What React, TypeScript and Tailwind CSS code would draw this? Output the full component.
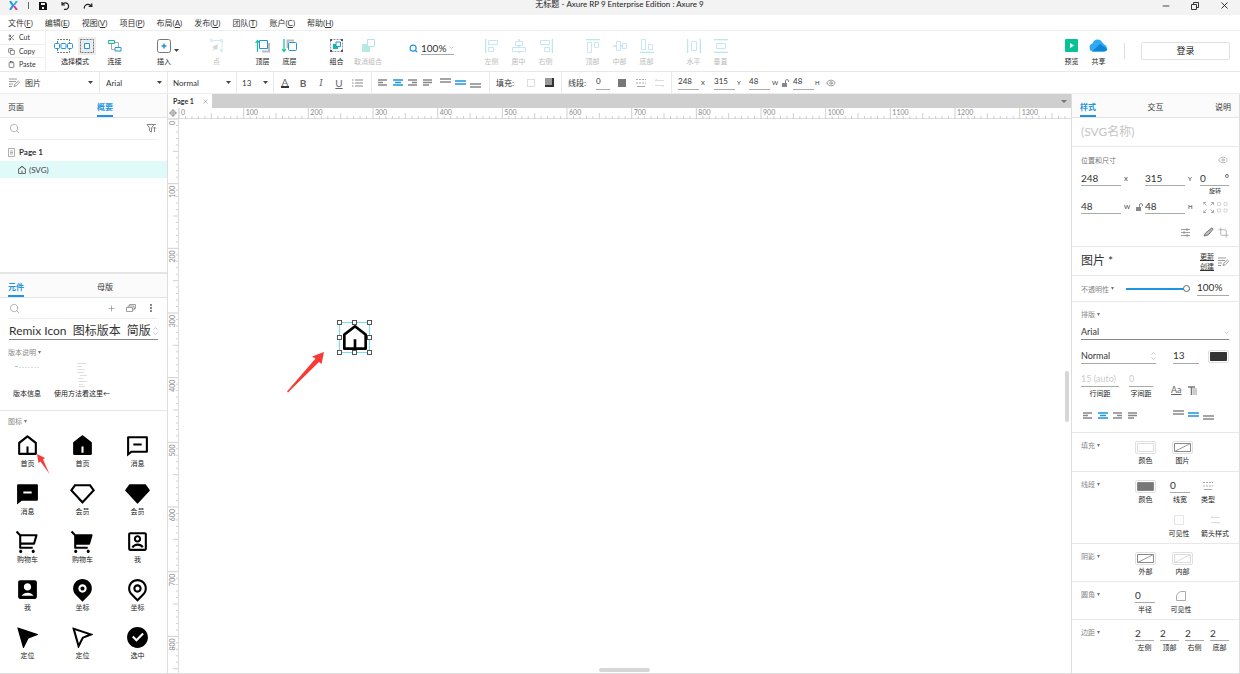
import React from 'react';
import {
  RiAccountBoxFill,
  RiAccountBoxLine,
  RiCheckboxCircleFill,
  RiMapPinFill,
  RiMapPinLine,
  RiNavigationFill,
  RiNavigationLine,
  RiShoppingCart2Fill,
  RiShoppingCart2Line,
  RiVipDiamondFill,
  RiVipDiamondLine,
} from 'react-icons/ri';
import { ClipboardIcon, Copy, Crop, Eye, Minus, Plus, Redo, Scissors, Search, X } from 'lucide-react';

const BLUE = '#1d95e0';
const TEAL = '#0fbf9b';

type Kids = { children?: React.ReactNode };

const Svg: React.FC<Kids & { w: number; h: number; className?: string }> = ({ w, h, className = '', children }) => (
  <svg width={w} height={h} viewBox={`0 0 ${w} ${h}`} fill="none" className={`flex-shrink-0 ${className}`} aria-hidden="true">
    {children}
  </svg>
);

const Caret = ({ className = '' }: { className?: string }) => (
  <Svg w={5} h={3} className={className}><path d="M0 0h5L2.5 3z" fill="#444" /></Svg>
);

const HomeLine = ({ size }: { size: number }) => (
  <svg width={size} height={size} viewBox="0 0 24 24" fill="currentColor" aria-hidden="true">
    <path d="M13 19h6V9.978l-7-5.444-7 5.444V19h6v-6h2v6zm8 1a1 1 0 0 1-1 1H4a1 1 0 0 1-1-1V9.49a1 1 0 0 1 .386-.79l8-6.222a1 1 0 0 1 1.228 0l8 6.222a1 1 0 0 1 .386.79V20z" />
  </svg>
);

const HomeFill = ({ size }: { size: number }) => (
  <svg width={size} height={size} viewBox="0 0 24 24" fill="currentColor" fillRule="evenodd" aria-hidden="true">
    <path d="M21 20a1 1 0 0 1-1 1H4a1 1 0 0 1-1-1V9.49a1 1 0 0 1 .386-.79l8-6.222a1 1 0 0 1 1.228 0l8 6.222a1 1 0 0 1 .386.79V20zM11 13v6h2v-6z" />
  </svg>
);

const MessageLine = ({ size }: { size: number }) => (
  <svg width={size} height={size} viewBox="0 0 24 24" fill="currentColor" aria-hidden="true">
    <path d="M6.455 19L2 22.5V4a1 1 0 0 1 1-1h18a1 1 0 0 1 1 1v14a1 1 0 0 1-1 1H6.455zm-.692-2H20V5H4v13.385L5.763 17zM8 10h8v2H8v-2z" />
  </svg>
);

const MessageFill = ({ size }: { size: number }) => (
  <svg width={size} height={size} viewBox="0 0 24 24" fill="currentColor" fillRule="evenodd" aria-hidden="true">
    <path d="M6.455 19L2 22.5V4a1 1 0 0 1 1-1h18a1 1 0 0 1 1 1v14a1 1 0 0 1-1 1H6.455zM8 10h8v2H8v-2z" />
  </svg>
);

const StyleIcon = ({ className = '' }: { className?: string }) => (
  <Svg w={11} h={9} className={className}>
    <path d="M0 1h8M0 3.5h7M0 6h4M0 8.500h3M5 8.500l.6-2 3.800-3.500 1.200 1.200L7 7.900z" stroke="#999" />
  </Svg>
);

const LockIcon = () => (
  <Svg w={7} h={8}>
    <rect y="4" width="5" height="4" fill="#888" />
    <path d="M3.500 4V2a1.500 1.500 0 0 1 3 0v1" stroke="#888" />
  </Svg>
);

const AlignIcon = ({ kind, active }: { kind: string; active?: boolean }) => {
  const paths: Record<string, string> = {
    left: 'M0 1h9M0 3.500h5M0 6h9',
    center: 'M0 1h10M2 3.500h6M0 6h10',
    right: 'M0 1h9M4 3.500h5M0 6h9',
    justify: 'M0 1h9M0 3.500h9M0 6h6',
  };
  return <Svg w={10} h={7}><path d={paths[kind]} stroke={active ? BLUE : '#888'} strokeWidth="1.300" /></Svg>;
};

const VAlignIcon = ({ pos, active }: { pos: 'top' | 'middle' | 'bottom'; active?: boolean }) => {
  const y = { top: 1, middle: 3, bottom: 6 }[pos];
  return (
    <Svg w={11} h={10}>
      <path d={`M0 ${y}h11M0 ${y + 3}h11`} stroke={active ? BLUE : '#888'} strokeWidth="1.300" />
    </Svg>
  );
};

const DashIcon = () => (
  <Svg w={10} h={8}><path d="M0 .5h10M0 4h10" stroke="#aaa" strokeDasharray="2 1" /><path d="M1 7.500h8" stroke="#aaa" /></Svg>
);

const ArrowsIcon = () => (
  <Svg w={9} h={8}><path d="M9 1.500H0l2-1.500M0 6.500h9l-2 1.500" stroke="#ddd" /></Svg>
);

const IconButton: React.FC<Kids & { label: string; className?: string }> = ({ label, className = '', children }) => (
  <button type="button" aria-label={label} className={`flex items-center justify-center ${className}`}>{children}</button>
);

/* Underlined numeric / text field */
const Field: React.FC<{ label: string; value: string; className?: string }> = ({ label, value, className = '' }) => (
  <input aria-label={label} defaultValue={value} className={`min-w-0 border-b border-[#aaa] bg-transparent pb-[2px] outline-none ${className}`} />
);

const menus = [
  ['文件', 'F'], ['编辑', 'E'], ['视图', 'V'], ['项目', 'P'], ['布局', 'A'],
  ['发布', 'U'], ['团队', 'T'], ['账户', 'C'], ['帮助', 'H'],
];

const TitleBar = () => (
  <header className="flex h-[15px] flex-shrink-0 items-center bg-[#f3f3f3] text-[#222]">
    <div className="flex flex-1 items-center pb-1 pl-[9px]">
      <Svg w={9} h={9}>
        <path d="M1 0l3 4.500L1 9" stroke={BLUE} strokeWidth="2" />
        <path d="M8 0L5 4" stroke="#2fb4e8" strokeWidth="2" />
        <path d="M5 5l3 4" stroke="#e0338a" strokeWidth="2" />
      </Svg>
      <span className="ml-[10px] h-[7px] w-px bg-[#666]" />
      <IconButton label="Save" className="ml-[10px]">
        <Svg w={8} h={8}><path fillRule="evenodd" d="M0 0h6.500L8 1.500V8H0zM2 1v2h4V1zM3 5v2h2V5z" fill="#111" /></Svg>
      </IconButton>
      <IconButton label="Undo" className="ml-[14px]">
        <Svg w={9} h={8}><path d="M1 0v3h3M1.200 3A3.300 3.300 0 1 1 3 7.200" stroke="#222" strokeWidth="1.200" /></Svg>
      </IconButton>
      <IconButton label="Redo" className="ml-[13px]"><Redo size={10} strokeWidth={3} /></IconButton>
    </div>
    <h1 className="whitespace-nowrap pb-[7px] text-[8px] leading-[10px] font-normal">无标题 - Axure RP 9 Enterprise Edition : Axure 9</h1>
    <div className="flex flex-1 items-center justify-end pr-[10px] pb-1">
      <IconButton label="Minimize"><Minus size={10} strokeWidth={2} /></IconButton>
      <IconButton label="Restore" className="ml-[20px]">
        <Svg w={8} h={8}><path d="M.5 2.500h5v5h-5zM2.500 2V.5h5v5H6" stroke="#333" /></Svg>
      </IconButton>
      <IconButton label="Close" className="ml-[20px]"><X size={11} strokeWidth={2} /></IconButton>
    </div>
  </header>
);

const Tool: React.FC<Kids & { label: string; className?: string; faded?: boolean }> = ({ label, className = 'w-[27px]', faded, children }) => (
  <button type="button" className={`flex flex-shrink-0 flex-col items-center pt-[6px] ${className}`}>
    <span className={`flex h-[17px] items-center justify-center ${faded ? 'opacity-30' : ''}`}>{children}</span>
    <span className={`mt-[2px] whitespace-nowrap text-[7px] leading-[10px] ${faded ? 'text-[#bbb]' : 'text-[#222]'}`}>{label}</span>
  </button>
);

const distribution = [
  [
    { label: '左侧', bar: 'M.5 0v14', box: 'M3.500 1.500h9v4h-9zM3.500 8.500h5v4h-5z' },
    { label: '居中', bar: 'M7 0v14', box: 'M3.500 2.500h7v4h-7zM.5 8.500h13v4H.5z' },
    { label: '右侧', bar: 'M13.500 0v14', box: 'M1.500 1.500h9v4h-9zM5.500 8.500h5v4h-5z' },
  ],
  [
    { label: '顶部', bar: 'M0 .5h14', box: 'M1.500 3.500h4v10h-4zM8.500 3.500h4v5h-4z' },
    { label: '中部', bar: 'M0 7h14', box: 'M3.500 2.500h4v9h-4zM9.500 4.500h4v5h-4z' },
    { label: '底部', bar: 'M0 13.500h14', box: 'M1.500 .5h4v10h-4zM8.500 5.500h4v5h-4z' },
  ],
  [
    { label: '水平', bar: 'M.5 0v14M13.500 0v14', box: 'M4.500 2.500h5v9h-5z' },
    { label: '垂直', bar: 'M0 .5h14M0 13.500h14', box: 'M2.500 4.500h9v5h-9z' },
  ],
];

const Toolbar = () => (
  <div className="flex h-[41px] flex-shrink-0 border-b border-[#e8e8e8]">
    <div className="flex w-[46px] flex-col divide-y divide-[#eee] border-r border-[#eee] text-[7px] text-[#333]">
      <button type="button" className="flex flex-1 items-center gap-[4px] pl-[8px]"><Scissors size={7} />Cut</button>
      <button type="button" className="flex flex-1 items-center gap-[4px] pl-[8px]"><Copy size={7} />Copy</button>
      <button type="button" className="flex flex-1 items-center gap-[4px] pl-[8px]"><ClipboardIcon size={7} />Paste</button>
    </div>
    <Tool label="选择模式" className="ml-[7px] w-[44px]">
      <Svg w={19} h={14}>
        <path d="M3.500 4V.5h12V4M3.500 10v3.500h12V10" stroke="#777" strokeDasharray="2 1" />
        <rect x=".5" y="4.500" width="5" height="5" rx="1" stroke={BLUE} />
        <rect x="7" y="4.500" width="5" height="5" rx="1" stroke={BLUE} />
        <rect x="13.500" y="4.500" width="5" height="5" rx="1" stroke={BLUE} />
      </Svg>
      <span className="ml-[5px] bg-[#ececec] p-[2px]">
        <Svg w={14} h={14}>
          <path d="M.5.5h13v13H.5z" stroke="#777" strokeDasharray="2 1" />
          <path d="M4.500 4.500h5v5h-5z" fill="#fff" stroke={BLUE} />
        </Svg>
      </span>
    </Tool>
    <Tool label="连接" className="ml-[4px] w-[27px]">
      <Svg w={14} h={13}>
        <path d="M.5 1.500h6v3h-6z" stroke={TEAL} />
        <path d="M7 3.500h3.500V8M3.500 5v5.500h3" stroke="#aaa" />
        <path d="M7 8.500h6v3.500H7z" fill="#fff" stroke={BLUE} />
      </Svg>
    </Tool>
    <Tool label="插入" className="ml-[22px] w-[28px]">
      <Svg w={14} h={14}>
        <rect x=".5" y=".5" width="13" height="13" rx="2" stroke="#777" />
        <path d="M7 4.500v5M4.500 7h5" stroke={BLUE} strokeWidth="1.500" />
      </Svg>
    </Tool>
    <Caret className="-ml-1 mt-[18px]" />
    <Tool label="点" faded className="ml-[24px] w-[27px]">
      <Svg w={13} h={13}>
        <path d="M1 1.500h11V12" stroke="#8bb" />
        <path d="M0 0h3v3H0zM10 0h3v3h-3zM10 10h3v3h-3z" fill="#7ccfe8" />
        <path d="M2 12l2-3-2-1 6-3-1 6-2-1z" fill="#777" />
      </Svg>
    </Tool>
    <Tool label="顶层" className="ml-[19px] w-[27px]">
      <Svg w={15} h={14}>
        <path d="M2.500 13V2M.5 4l2-2.500 2 2.500" stroke={TEAL} strokeWidth="1.200" />
        <path d="M7 12.500h7V4" stroke="#bbb" strokeWidth="2" />
        <path d="M4.500 1.500h8v8h-8z" fill="#fff" stroke={BLUE} />
      </Svg>
    </Tool>
    <Tool label="底层">
      <Svg w={15} h={14}>
        <path d="M2 0v12M0 10l2 2.500L4 10" stroke={TEAL} strokeWidth="1.200" />
        <path d="M5.500 9V1.500H12" stroke="#bbb" strokeWidth="2" />
        <rect x="6.500" y="3.500" width="8" height="8" rx="1" fill="#fff" stroke={BLUE} />
      </Svg>
    </Tool>
    <Tool label="组合" className="ml-[20px] w-[27px]">
      <Svg w={13} h={13}>
        <path d="M.5.5h12v12H.5z" stroke="#999" strokeDasharray="2 1" />
        <path d="M0 0h2v2H0zM11 0h2v2h-2zM0 11h2v2H0zM11 11h2v2h-2z" fill="#555" />
        <path d="M3 5h5v5H3z" fill={TEAL} />
        <path d="M6 3h4.500v4.500H6z" fill="#fff" stroke={BLUE} />
      </Svg>
    </Tool>
    <Tool label="取消组合" faded className="w-[36px]">
      <Svg w={13} h={13}><path d="M0 5h8v8H0z" fill={TEAL} /><path d="M5.500.5h7v7h-7z" fill="#fff" stroke={BLUE} /></Svg>
    </Tool>
    <label className="ml-[23px] flex h-[34px] flex-shrink-0 items-center">
      <Search size={9} strokeWidth={3} color={BLUE} />
      <span className="ml-[3px] flex h-[14px] w-[33px] items-center border-b border-[#aaa]">
        <select aria-label="Zoom" className="min-w-0 flex-1 appearance-none text-[10px] leading-[12px] text-[#333]">
          <option>100%</option>
        </select>
        <Svg w={5} h={3}><path d="M.5.5l2 2 2-2" stroke="#bbb" strokeWidth=".8" /></Svg>
      </span>
    </label>
    <div className="ml-[24px] flex gap-[20px]">
      {distribution.map((group, i) => (
        <div key={i} className="flex">
          {group.map((t) => (
            <Tool key={t.label} label={t.label} faded>
              <Svg w={14} h={14}><path d={t.bar} stroke={TEAL} strokeWidth="1.500" /><path d={t.box} fill="#fff" stroke="#4aaef0" strokeLinejoin="round" /></Svg>
            </Tool>
          ))}
        </div>
      ))}
    </div>
    <Tool label="预览" className="ml-auto w-[27px]">
      <Svg w={13} h={13}><rect width="13" height="13" rx="1" fill="#08c295" /><path d="M5 4l4 2.500L5 9z" fill="#fff" /></Svg>
    </Tool>
    <Tool label="共享">
      <Svg w={19} h={13}>
        <path d="M4.500 12.500a4 4 0 0 1-.8-7.900 5 5 0 0 1 9.500-1A4 4 0 0 1 15 5.500a3.600 3.600 0 0 1 0 7z" fill="#2fabf5" />
        <path d="M3 12.500l8-7.500 7.500 5a3.500 3.500 0 0 1-3.500 2.500z" fill="#0c85d6" />
      </Svg>
    </Tool>
    <span className="mt-[12px] ml-[12px] h-[16px] w-px bg-[#ddd]" />
    <button type="button" className="mt-[11px] mr-[10px] ml-[16px] h-[18px] w-[89px] rounded-[2px] border border-[#e2e2e2] text-[9px] text-[#222]">登录</button>
  </div>
);

const FormatSelect = ({ label, value, className }: { label: string; value: string; className: string }) => (
  <div className={`flex flex-shrink-0 items-center border-r border-[#e8e8e8] pr-[5px] ${className}`}>
    <select aria-label={label} className="min-w-0 flex-1 appearance-none text-[8px] leading-[12px]"><option>{value}</option></select>
    <Caret />
  </div>
);

const FormatBar = () => (
  <div className="flex h-[22px] flex-shrink-0 border-b border-[#eee] text-[8px] text-[#333]">
    <div className="flex w-[100px] flex-shrink-0 items-center border-r border-[#e8e8e8] pr-[6px] pl-[9px]">
      <StyleIcon />
      <select aria-label="Widget style" className="ml-[5px] min-w-0 flex-1 appearance-none leading-[12px]"><option>图片</option></select>
      <Caret />
    </div>
    <FormatSelect label="Font" value="Arial" className="w-[68px] pl-[6px]" />
    <FormatSelect label="Weight" value="Normal" className="w-[69px] pl-[5px]" />
    <FormatSelect label="Size" value="13" className="w-[37px] pl-[5px]" />
    <div className="flex w-[98px] flex-shrink-0 items-center border-r border-[#e8e8e8] pl-[2px] text-[10px] leading-[10px] text-[#666]">
      <IconButton label="Text color" className="w-[18px]"><span className="border-b-2 border-[#333] px-px leading-[8px]">A</span></IconButton>
      <IconButton label="Bold" className="w-[18px] font-bold">B</IconButton>
      <IconButton label="Italic" className="w-[18px] font-serif italic">I</IconButton>
      <IconButton label="Underline" className="w-[18px] underline">U</IconButton>
      <IconButton label="List" className="w-[18px]">
        <Svg w={11} h={8}><path d="M3 1h8M3 4h8M3 7h8M0 1h1.500M0 4h1.500M0 7h1.500" stroke="#888" /></Svg>
      </IconButton>
    </div>
    <div className="flex w-[118px] flex-shrink-0 items-center border-r border-[#e8e8e8] pl-[3px]">
      {['left', 'center', 'right', 'justify'].map((k) => (
        <IconButton key={k} label={`Align ${k}`} className="w-[15px]"><AlignIcon kind={k} active={k === 'center'} /></IconButton>
      ))}
      <IconButton label="Top" className="ml-[3px] w-[15px]"><VAlignIcon pos="top" /></IconButton>
      <IconButton label="Middle" className="w-[15px]"><VAlignIcon pos="middle" active /></IconButton>
      <IconButton label="Bottom" className="w-[15px]"><VAlignIcon pos="bottom" /></IconButton>
    </div>
    <div className="flex w-[72px] flex-shrink-0 items-center border-r border-[#e8e8e8] pl-[6px]">
      <span className="w-[31px]">填充:</span>
      <IconButton label="Fill" className="h-2 w-2 border border-[#ddd]" />
      <IconButton label="Shadow" className="ml-[10px] h-[9px] w-[9px] border-r-2 border-b-2 border-[#333] bg-[#999]" />
    </div>
    <div className="flex w-[110px] flex-shrink-0 items-center border-r border-[#e8e8e8] pl-[6px]">
      <span className="w-[28px]">线段:</span>
      <Field label="Line width" value="0" className="w-[14px]" />
      <IconButton label="Line color" className="ml-[8px] h-2 w-2 bg-[#777]" />
      <IconButton label="Line style" className="ml-[10px]"><DashIcon /></IconButton>
      <IconButton label="Arrow style" className="ml-[9px]"><ArrowsIcon /></IconButton>
    </div>
    <div className="flex items-center pl-[6px]">
      <Field label="X" value="248" className="w-[21px]" /><span className="w-[15px] pl-[2px] text-[6px]">X</span>
      <Field label="Y" value="315" className="w-[21px]" /><span className="w-[14px] pl-[2px] text-[6px]">Y</span>
      <Field label="Width" value="48" className="w-[21px]" /><span className="w-[12px] pl-[2px] text-[6px]">W</span>
      <LockIcon />
      <Field label="Height" value="48" className="ml-[4px] w-[21px]" /><span className="w-[12px] pl-px text-[6px]">H</span>
      <IconButton label="Visibility"><Eye size={10} color="#888" /></IconButton>
    </div>
  </div>
);

const PanelTabs = ({ tabs, active, className }: { tabs: string[]; active: string; className: string }) => (
  <div role="tablist" className={`flex h-[24px] flex-shrink-0 border-b border-[#e2e2e2] bg-[#fbfbfb] px-[8px] text-[8px] ${className}`}>
    {tabs.map((t) => (
      <button
        key={t}
        type="button"
        role="tab"
        aria-selected={t === active}
        className={`border-b-2 pt-[4px] ${t === active ? 'border-[#1d95e0] font-bold text-[#1d95e0]' : 'border-transparent text-[#333]'}`}
      >
        {t}
      </button>
    ))}
  </div>
);

const OutlinePanel = () => (
  <section className="flex h-[180px] flex-shrink-0 flex-col border-b-2 border-[#e6e6e6]">
    <PanelTabs tabs={['页面', '概要']} active="概要" className="gap-[73px]" />
    <label className="mx-[9px] flex h-[22px] items-center border-b border-[#eee]">
      <Search size={11} color="#999" strokeWidth={1.500} />
      <input aria-label="Search outline" className="min-w-0 flex-1 outline-none" />
      <Svg w={11} h={9} className="mr-[1px]"><path d="M1 .5h7L5.500 4v4l-2-1V4zM8.500 8V3M7 4.500L8.500 3 10 4.500M8 .5h2" stroke="#888" /></Svg>
    </label>
    <ul className="pt-[3px] text-[8px] text-[#333]">
      <li className="flex h-[18px] items-center pl-[8px] font-bold">
        <Svg w={7} h={9}><path d="M.5.5h6v8h-6zM2 3h3M2 4.500h3M2 6h3" stroke="#999" strokeWidth=".8" /></Svg>
        <span className="ml-[4px]">Page 1</span>
      </li>
      <li className="flex h-[17px] items-center bg-[#e0f9f9] pl-[17px] text-[#444]">
        <HomeLine size={10} />
        <span className="ml-[2px]">(SVG)</span>
      </li>
    </ul>
  </section>
);

const libraryItems = [
  { label: '首页', icon: HomeLine },
  { label: '首页', icon: HomeFill },
  { label: '消息', icon: MessageLine },
  { label: '消息', icon: MessageFill },
  { label: '会员', icon: RiVipDiamondLine },
  { label: '会员', icon: RiVipDiamondFill },
  { label: '购物车', icon: RiShoppingCart2Line },
  { label: '购物车', icon: RiShoppingCart2Fill },
  { label: '我', icon: RiAccountBoxLine },
  { label: '我', icon: RiAccountBoxFill },
  { label: '坐标', icon: RiMapPinFill },
  { label: '坐标', icon: RiMapPinLine },
  { label: '定位', icon: RiNavigationFill },
  { label: '定位', icon: RiNavigationLine },
  { label: '选中', icon: RiCheckboxCircleFill },
];

const GroupLabel: React.FC<Kids & { className?: string }> = ({ children, className = '' }) => (
  <h2 className={`flex items-center gap-[2px] whitespace-nowrap text-[7px] leading-[10px] font-normal text-[#888] ${className}`}>
    {children}
    <Svg w={3} h={3}><path d="M0 0h3L1.500 3z" fill="#777" /></Svg>
  </h2>
);

const LibraryPanel = () => (
  <section className="flex min-h-0 flex-1 flex-col text-[#222]">
    <PanelTabs tabs={['元件', '母版']} active="元件" className="gap-[73px]" />
    <div className="mx-[9px] flex h-[21px] items-center border-b border-[#eee] text-[#777]">
      <Search size={11} color="#999" strokeWidth={1.500} />
      <input aria-label="Search library" className="min-w-0 flex-1 outline-none" />
      <IconButton label="Add library"><Plus size={9} strokeWidth={1.500} /></IconButton>
      <IconButton label="Libraries" className="ml-[10px]">
        <Svg w={10} h={8}><path d="M.5 3.500h6v4h-6zM2 3V2h6v4H7M3.500 2V.5h6v4H8" stroke="#888" strokeWidth=".8" /></Svg>
      </IconButton>
      <IconButton label="More" className="mr-[6px] ml-[14px]">
        <Svg w={2} h={8}><path d="M0 0h2v2H0zM0 3h2v2H0zM0 6h2v2H0z" fill="#888" /></Svg>
      </IconButton>
    </div>
    <div className="mx-[9px] flex h-[22px] items-center border-b border-[#888] pt-[3px]">
      <select aria-label="Library" className="min-w-0 flex-1 appearance-none whitespace-pre text-[12px] leading-[16px] text-[#333]">
        <option>Remix Icon&nbsp; 图标版本&nbsp; 简版</option>
      </select>
      <Svg w={5} h={8}><path d="M.5 2.500l2-2 2 2M.5 5.500l2 2 2-2" stroke="#bbb" strokeWidth=".8" /></Svg>
    </div>
    <div className="flex-shrink-0 border-b border-[#e6e6e6] pt-[7px]">
      <GroupLabel className="pl-[8px]">版本说明</GroupLabel>
      <div className="flex pt-[5px] pb-[12px] pl-[8px] text-[7px] leading-[10px]">
        <button type="button" className="flex w-[38px] flex-col items-center">
          <Svg w={25} h={26}><path d="M0 4.500h3" stroke="#9cc8f0" /><path d="M4 5.500h21" stroke="#ddd" strokeDasharray="2 1" /></Svg>
          版本信息
        </button>
        <button type="button" className="ml-[8px] flex flex-col items-center whitespace-nowrap">
          <Svg w={12} h={26}>
            <path d="M1 1.500h9M1 4.500h5M1 10.500h7M2 16.500h5M3 19.500h8M3 24.500h6" stroke="#ddd" />
            <path d="M1 7.500h8M4 13.500h7M3 22.500h4" stroke="#ecdcdc" />
          </Svg>
          使用方法看这里←
        </button>
      </div>
    </div>
    <div className="relative pt-[5px]">
      <GroupLabel className="pl-[8px]">图标</GroupLabel>
      <div className="grid grid-cols-3 pt-[7px] pr-[2px]">
        {libraryItems.map(({ label, icon: Icon }, i) => (
          <button key={i} type="button" className="flex h-[48px] flex-col items-center text-[7px] leading-[10px]">
            <span className="text-black"><Icon size={25} /></span>
            <span>{label}</span>
          </button>
        ))}
      </div>
      <svg width="13" height="20" viewBox="0 0 13 20" className="absolute top-[43px] left-[37px]" aria-hidden="true">
        <path d="M0 0l8 4-2 1.500L12.500 20 3.500 7.500 1.500 9z" fill="#f83a36" />
      </svg>
    </div>
  </section>
);

/* 100 canvas units per labelled step, drawn at the current zoom */
const STEP = 64.67;

const HRuler = () => (
  <svg className="h-[11px] min-w-0 flex-1" aria-hidden="true">
    {Array.from({ length: 138 }, (_, i) => {
      const x = (i * STEP) / 10;
      const top = i % 10 === 0 ? 0 : i % 5 === 0 ? 5 : 8;
      return <line key={i} x1={x} x2={x} y1={top} y2={11} stroke="#c4c4c4" strokeWidth=".8" />;
    })}
    {Array.from({ length: 14 }, (_, i) => (
      <text key={i} x={i * STEP + 2} y={7} fontSize={7} fill="#888">{i * 100}</text>
    ))}
  </svg>
);

const VRuler = () => (
  <svg className="h-full w-[11px]" aria-hidden="true">
    {Array.from({ length: 90 }, (_, i) => {
      const y = (i * STEP) / 10;
      const left = i % 10 === 0 ? 0 : i % 5 === 0 ? 5 : 8;
      return <line key={i} y1={y} y2={y} x1={left} x2={11} stroke="#c4c4c4" strokeWidth=".8" />;
    })}
    {Array.from({ length: 9 }, (_, i) => (
      <text key={i} transform={`translate(7 ${i * STEP + 2}) rotate(-90)`} textAnchor="end" fontSize={7} fill="#888">{i * 100}</text>
    ))}
  </svg>
);

const handles = [
  [0, 0], [15, 0], [30, 0], [0, 15], [30, 15], [0, 30], [15, 30], [30, 30],
];

const Canvas = () => (
  <main className="flex min-w-0 flex-1 flex-col">
    <div className="flex h-[14px] flex-shrink-0 items-stretch bg-[#cfcfcf]">
      <div className="flex w-[44px] items-center bg-white pl-[5px] text-[7px] font-bold text-[#333]">
        Page 1
        <IconButton label="Close tab" className="ml-auto pr-[3px]"><X size={7} color="#888" /></IconButton>
      </div>
      <IconButton label="All tabs" className="mr-[4px] ml-auto"><Svg w={6} h={3}><path d="M0 0h6L3 3z" fill="#777" /></Svg></IconButton>
    </div>
    <div className="flex h-[11px] flex-shrink-0 border-b border-[#ddd]">
      <div className="flex w-[11px] items-center justify-center border-r border-[#ddd]">
        <Svg w={8} h={8}><path d="M4 0v8M0 4h8" stroke="#999" /><circle cx="4" cy="4" r="2.500" stroke="#999" /></Svg>
      </div>
      <HRuler />
    </div>
    <div className="flex min-h-0 flex-1">
      <div className="w-[11px] flex-shrink-0 overflow-hidden border-r border-[#ddd]"><VRuler /></div>
      <div className="relative min-w-0 flex-1 overflow-hidden bg-white">
        <div className="absolute top-[203px] left-[160px] flex h-[31px] w-[31px] items-center justify-center border border-[#6fe3e8] text-black">
          <span className="flex-shrink-0"><HomeLine size={32} /></span>
        </div>
        <svg width="36" height="36" className="absolute top-[200px] left-[157px]" aria-hidden="true">
          {handles.map(([x, y]) => (
            <rect key={`${x}-${y}`} x={x + 1.5} y={y + 1.5} width="4" height="4" fill="#fff" stroke="#555" />
          ))}
        </svg>
        <svg width="39" height="42" viewBox="0 0 39 42" className="absolute top-[232px] left-[107px]" aria-hidden="true">
          <path d="M38 1L26 5.500l3.500 2L1 40.500l1 1L33 11l2.500 2z" fill="#f83a36" />
        </svg>
        <span className="absolute top-[252px] right-[2px] h-[51px] w-[4px] rounded-full bg-[#d6d6d6]" />
        <span className="absolute bottom-[1px] left-[420px] h-[4px] w-[51px] rounded-full bg-[#d6d6d6]" />
      </div>
    </div>
  </main>
);

const Section: React.FC<Kids & { className?: string }> = ({ children, className = '' }) => (
  <section className={`flex-shrink-0 border-b border-[#e8e8e8] pr-[10px] pl-[9px] ${className}`}>{children}</section>
);

const Captioned: React.FC<Kids & { label: string; className?: string }> = ({ label, className = '', children }) => (
  <div className={`flex flex-shrink-0 flex-col items-center ${className}`}>
    <div className="flex h-[14px] w-full items-center justify-center">{children}</div>
    <span className="whitespace-nowrap text-[7px] leading-[12px] text-[#222]">{label}</span>
  </div>
);

const Swatch = ({ label, kind }: { label: string; kind: 'empty' | 'none' | 'faded' | 'gray' | 'dark' }) => (
  <IconButton label={label} className="flex-shrink-0 rounded-[2px] border border-[#e0e0e0]">
    <Svg w={19} h={11}>
      <path
        d="M1.500 1.500h16v8h-16z"
        fill={kind === 'gray' ? '#777' : kind === 'dark' ? '#333' : '#fff'}
        stroke={kind === 'none' || kind === 'gray' ? '#888' : kind === 'dark' ? '#333' : '#ddd'}
      />
      {(kind === 'none' || kind === 'faded') && <path d="M1.500 9.500l16-8" stroke={kind === 'none' ? '#999' : '#ddd'} />}
    </Svg>
  </IconButton>
);

const Inspector = () => (
  <aside className="flex w-[169px] flex-shrink-0 flex-col overflow-hidden border-r border-l border-[#ddd] text-[10px] leading-[12px] text-[#333]">
    <PanelTabs tabs={['样式', '交互', '说明']} active="样式" className="justify-between" />
    <Section className="flex h-[29px] items-center">
      <input aria-label="Name" placeholder="(SVG名称)" className="w-full text-[12px] leading-[16px] outline-none placeholder:text-[#c4c4c4]" />
    </Section>
    <Section className="h-[100px] border-[#ddd] pt-[7px]">
      <div className="flex h-[12px] items-center justify-between pr-[1px] text-[7px] text-[#777]">
        <h2>位置和尺寸</h2>
        <IconButton label="Visibility"><Eye size={10} color="#999" strokeWidth={1.500} /></IconButton>
      </div>
      <div className="mt-[6px] flex items-center">
        <Field label="X position" value="248" className="h-[14px] w-[40px]" /><span className="w-[24px] pl-[3px] text-[6px]">X</span>
        <Field label="Y position" value="315" className="h-[14px] w-[40px]" /><span className="w-[15px] pl-[3px] text-[6px]">Y</span>
        <div className="flex h-[14px] flex-1 border-b border-[#aaa] pb-[2px]">
          <input aria-label="Rotation" defaultValue="0" className="w-[20px] outline-none" /><span className="ml-auto">°</span>
        </div>
      </div>
      <div className="flex h-[10px] justify-end pr-[8px] text-[6px] leading-[10px]">旋转</div>
      <div className="mt-[4px] flex items-center">
        <Field label="Object width" value="48" className="h-[14px] w-[40px]" /><span className="w-[12px] pl-[3px] text-[6px]">W</span>
        <span className="flex w-[12px] justify-center"><LockIcon /></span>
        <Field label="Object height" value="48" className="h-[14px] w-[40px]" /><span className="w-[18px] pl-[3px] text-[6px]">H</span>
        <Svg w={11} h={11}><path d="M0 3V.5h3M.5.5l3 3M8 .5h2.500V3M10.500.5l-3 3M0 8v2.500h3M.5 10.500l3-3M8 10.500h2.500V8M10.500 10.500l-3-3" stroke="#999" strokeWidth=".8" /></Svg>
        <Svg w={11} h={11} className="ml-[3px]"><path d="M.5.5h3v3h-3zM7 .5h3v3H7zM.5 7h3v3h-3zM7 7h3v3H7z" stroke="#ccc" strokeWidth=".8" /></Svg>
      </div>
      <div className="mt-[12px] flex h-[12px] items-center justify-end">
        <Svg w={9} h={9}><path d="M0 1.500h9M0 4.500h9M0 7.500h9M6 0v3M3 3v3M6 6v3" stroke="#888" strokeWidth=".8" /></Svg>
        <Svg w={11} h={10} className="ml-[13px]"><path d="M1 9l1.500-3L9 .8l1.200 1.200-5 6z" fill="#bbb" stroke="#777" /></Svg>
        <Crop size={11} color="#999" strokeWidth={1.500} className="ml-[4px]" />
      </div>
    </Section>
    <Section className="flex h-[29px] items-center">
      <h2 className="text-[12px] leading-[16px]">图片 *</h2>
      <div className="ml-auto flex flex-col text-[7px] leading-[10px] underline">
        <button type="button" className="underline">更新</button>
        <button type="button" className="underline">创建</button>
      </div>
      <StyleIcon className="ml-[4px]" />
    </Section>
    <Section className="flex h-[26px] items-center">
      <GroupLabel className="w-[45px]">不透明性</GroupLabel>
      <input
        type="range"
        aria-label="Opacity"
        defaultValue={100}
        className="h-[7px] w-[64px] appearance-none bg-[linear-gradient(#1d95e0,#1d95e0)] bg-[length:100%_2px] bg-center bg-no-repeat [&::-webkit-slider-thumb]:h-[7px] [&::-webkit-slider-thumb]:w-[7px] [&::-webkit-slider-thumb]:appearance-none [&::-webkit-slider-thumb]:rounded-full [&::-webkit-slider-thumb]:border [&::-webkit-slider-thumb]:border-[#666] [&::-webkit-slider-thumb]:bg-white"
      />
      <Field label="Opacity value" value="100%" className="ml-auto h-[14px] w-[32px]" />
    </Section>
    <Section className="h-[131px] pt-[7px]">
      <GroupLabel>排版</GroupLabel>
      <div className="mt-[6px] flex h-[15px] items-center border-b border-[#888]">
        <select aria-label="Typeface" className="flex-1 appearance-none text-[9px] leading-[12px]"><option>Arial</option></select>
        <Svg w={5} h={3}><path d="M.5.5l2 2 2-2" stroke="#bbb" strokeWidth=".8" /></Svg>
      </div>
      <div className="mt-[8px] flex items-center">
        <div className="flex h-[16px] w-[75px] items-center border-b border-[#aaa]">
          <select aria-label="Font weight" className="flex-1 appearance-none text-[9px] leading-[12px]"><option>Normal</option></select>
          <Svg w={5} h={8}><path d="M.5 2.500l2-2 2 2M.5 5.500l2 2 2-2" stroke="#bbb" strokeWidth=".8" /></Svg>
        </div>
        <Field label="Font size" value="13" className="ml-[17px] h-[16px] w-[26px]" />
        <span className="ml-auto"><Swatch label="Font color" kind="dark" /></span>
      </div>
      <div className="mt-[9px] flex text-[9px] text-[#ccc]">
        <Captioned label="行间距" className="w-[38px]"><Field label="Line spacing" value="15 (auto)" className="h-[14px] w-full" /></Captioned>
        <Captioned label="字间距" className="ml-[10px] w-[24px]"><Field label="Character spacing" value="0" className="h-[14px] w-full" /></Captioned>
        <div className="ml-[18px] flex items-end gap-[6px] pb-[3px] text-[9px] text-[#666]">
          <button type="button" className="underline">Aa</button>
          <IconButton label="Text shadow">
            <Svg w={10} h={10}><path d="M5 2h4v7H5z" fill="#ccc" /><path d="M0 1h7M3.500 1v8" stroke="#777" strokeWidth="1.500" /></Svg>
          </IconButton>
        </div>
      </div>
      <div className="mt-[11px] flex h-[10px] items-center pl-[2px]">
        {['left', 'center', 'right', 'justify'].map((k) => (
          <IconButton key={k} label={`Text ${k}`} className="w-[15px] pr-[5px]"><AlignIcon kind={k} active={k === 'center'} /></IconButton>
        ))}
        <IconButton label="Text top" className="ml-[28px] w-[15px]"><VAlignIcon pos="top" /></IconButton>
        <IconButton label="Text middle" className="w-[15px]"><VAlignIcon pos="middle" active /></IconButton>
        <IconButton label="Text bottom" className="w-[15px]"><VAlignIcon pos="bottom" /></IconButton>
      </div>
    </Section>
    <Section className="flex h-[39px] items-start pt-[7px]">
      <GroupLabel className="w-[54px]">填充</GroupLabel>
      <Captioned label="颜色" className="w-[21px]"><Swatch label="Fill color" kind="empty" /></Captioned>
      <Captioned label="图片" className="ml-[16px] w-[21px]"><Swatch label="Fill image" kind="none" /></Captioned>
    </Section>
    <Section className="h-[72px] pt-[7px]">
      <div className="flex items-start">
        <GroupLabel className="w-[54px]">线段</GroupLabel>
        <Captioned label="颜色" className="w-[21px]"><Swatch label="Border color" kind="gray" /></Captioned>
        <Captioned label="线宽" className="ml-[14px] w-[20px]"><Field label="Border width" value="0" className="h-[14px] w-full" /></Captioned>
        <Captioned label="类型" className="ml-[8px] w-[20px]"><DashIcon /></Captioned>
      </div>
      <div className="mt-[8px] flex justify-end">
        <Captioned label="可见性" className="w-[24px]">
          <Svg w={10} h={10}><path d="M.5.5h9v9h-9z" stroke="#ccc" strokeDasharray="1 1" /></Svg>
        </Captioned>
        <Captioned label="箭头样式" className="ml-[10px] w-[28px]"><ArrowsIcon /></Captioned>
      </div>
    </Section>
    <Section className="flex h-[38px] items-start pt-[7px]">
      <GroupLabel className="w-[54px]">阴影</GroupLabel>
      <Captioned label="外部" className="w-[21px]"><Swatch label="Outer shadow" kind="none" /></Captioned>
      <Captioned label="内部" className="ml-[16px] w-[21px]"><Swatch label="Inner shadow" kind="faded" /></Captioned>
    </Section>
    <Section className="flex h-[38px] items-start pt-[7px]">
      <GroupLabel className="w-[54px]">圆角</GroupLabel>
      <Captioned label="半径" className="w-[20px]"><Field label="Radius" value="0" className="h-[14px] w-full" /></Captioned>
      <Captioned label="可见性" className="ml-[14px] w-[24px]">
        <Svg w={10} h={10}><path d="M.5 9.500V6a5.500 5.500 0 0 1 5.500-5.500h3.500v9z" stroke="#aaa" /></Svg>
      </Captioned>
    </Section>
    <section className="flex items-start pt-[7px] pl-[9px]">
      <GroupLabel className="w-[54px]">边距</GroupLabel>
      <div className="flex gap-[6px]">
        {['左侧', '顶部', '右侧', '底部'].map((side) => (
          <Captioned key={side} label={side} className="w-[19px]"><Field label={`${side}边距`} value="2" className="h-[14px] w-full" /></Captioned>
        ))}
      </div>
    </section>
  </aside>
);

const App: React.FC = () => (
  <div className="flex h-screen flex-col overflow-hidden border-b border-[#ddd] bg-white font-['Lato','Noto_Sans_CJK_SC',sans-serif]">
    <TitleBar />
    <nav className="flex h-[16px] flex-shrink-0 items-center gap-[12px] border-b border-[#eee] pl-[8px] text-[8px] text-[#333]">
      {menus.map(([name, key]) => (
        <button key={key} type="button" className="whitespace-nowrap">{name}(<u>{key}</u>)</button>
      ))}
    </nav>
    <Toolbar />
    <FormatBar />
    <div className="flex min-h-0 flex-1">
      <aside className="flex w-[168px] flex-shrink-0 flex-col overflow-hidden border-r border-[#ddd]">
        <OutlinePanel />
        <LibraryPanel />
      </aside>
      <Canvas />
      <Inspector />
    </div>
  </div>
);

export default App;
